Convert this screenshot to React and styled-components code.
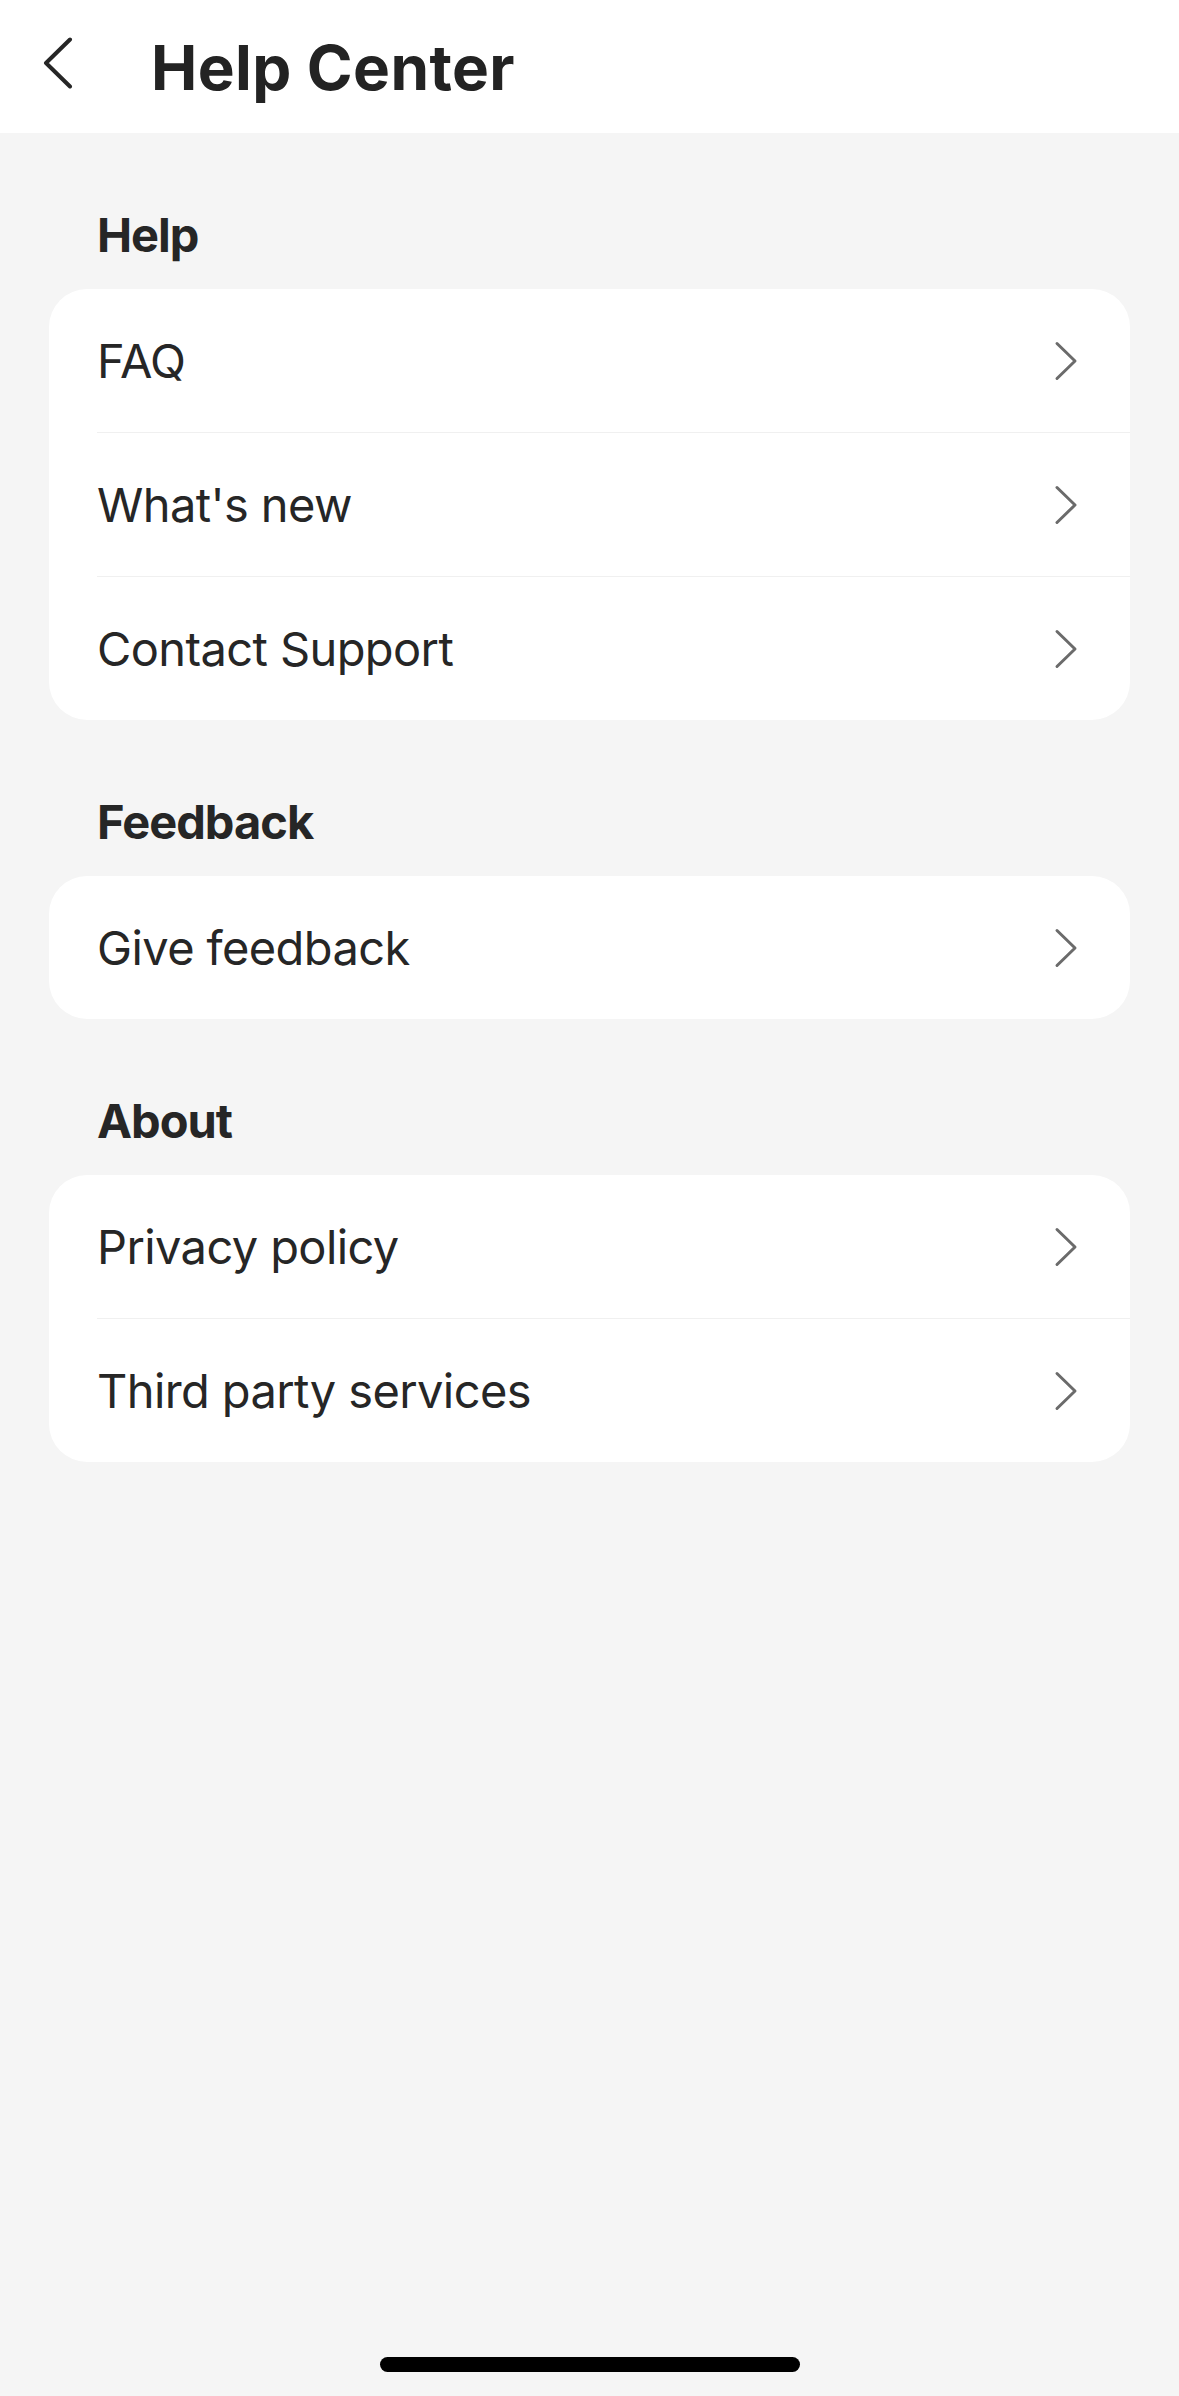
import React from "react";
import styled, { createGlobalStyle } from "styled-components";

const GlobalStyle = createGlobalStyle`
  html, body {
    margin: 0;
    padding: 0;
    background: #f5f5f5;
    font-family: Inter, "Noto Sans", "Liberation Sans", sans-serif;
    color: #262626;
    -webkit-font-smoothing: antialiased;
  }
  * { box-sizing: border-box; }
`;

const Page = styled.div`
  min-height: 100vh;
  display: flex;
  flex-direction: column;
  background: #f5f5f5;
`;

const Header = styled.header`
  height: 133px;
  background: #ffffff;
  display: flex;
  align-items: center;
  padding-left: 43px;
  gap: 78px;
`;

const BackButton = styled.button`
  border: 0;
  background: none;
  padding: 0;
  margin-bottom: 7px;
  display: flex;
  cursor: pointer;
`;

const Title = styled.h1`
  margin: 3px 0 0;
  font-family: Inter, "Liberation Sans", sans-serif;
  font-size: 62px;
  line-height: 62px;
  font-weight: 700;
  letter-spacing: 0.4px;
  color: #232323;
`;

const Content = styled.main`
  padding: 0 49px;
  display: flex;
  flex-direction: column;
`;

const Section = styled.section`
  padding-top: 73px;
  display: flex;
  flex-direction: column;
  gap: 25px;
`;

const SectionLabel = styled.h2`
  margin: 0;
  padding-left: 48px;
  font-size: 47px;
  line-height: 58px;
  font-weight: 700;
  letter-spacing: -1px;
  color: #262626;
`;

const Card = styled.div`
  background: #ffffff;
  border-radius: 38px;
  overflow: hidden;
`;

const Row = styled.div`
  height: ${(p) => (p.$first ? 143 : 144)}px;
  padding-left: 48px;
  display: flex;
`;

const RowInner = styled.div`
  flex: 1;
  display: flex;
  align-items: center;
  justify-content: space-between;
  padding-right: 52px;
  border-top: ${(p) => (p.$first ? "none" : "1px solid #f0f0f0")};
`;

const RowLabel = styled.span`
  font-size: 47px;
  line-height: 58px;
  font-weight: 400;
  letter-spacing: -0.6px;
  color: #262626;
`;

const HomeIndicator = styled.div`
  width: 420px;
  height: 15px;
  border-radius: 8px;
  background: #000;
  margin: auto auto 24px;
`;

const BackIcon = () => (
  <svg width="30" height="52" viewBox="0 0 30 52" fill="none">
    <path
      d="M27 2.5 L3 26 L27 49.5"
      stroke="#262626"
      strokeWidth="4"
      strokeLinecap="round"
      strokeLinejoin="round"
    />
  </svg>
);

const Chevron = () => (
  <svg width="24" height="40" viewBox="0 0 24 40" fill="none">
    <path
      d="M3 2.5 L21 20 L3 37.5"
      stroke="#6b6b6b"
      strokeWidth="3"
      strokeLinecap="round"
      strokeLinejoin="round"
    />
  </svg>
);

const sections = [
  { title: "Help", items: ["FAQ", "What's new", "Contact Support"] },
  { title: "Feedback", items: ["Give feedback"] },
  { title: "About", items: ["Privacy policy", "Third party services"] },
];

export default function App() {
  return (
    <>
      <GlobalStyle />
      <Page>
        <Header>
          <BackButton aria-label="Back">
            <BackIcon />
          </BackButton>
          <Title>Help Center</Title>
        </Header>
        <Content>
          {sections.map((s) => (
            <Section key={s.title}>
              <SectionLabel>{s.title}</SectionLabel>
              <Card>
                {s.items.map((item, i) => (
                  <Row key={item} $first={i === 0}>
                    <RowInner $first={i === 0}>
                      <RowLabel>{item}</RowLabel>
                      <Chevron />
                    </RowInner>
                  </Row>
                ))}
              </Card>
            </Section>
          ))}
        </Content>
        <HomeIndicator />
      </Page>
    </>
  );
}
